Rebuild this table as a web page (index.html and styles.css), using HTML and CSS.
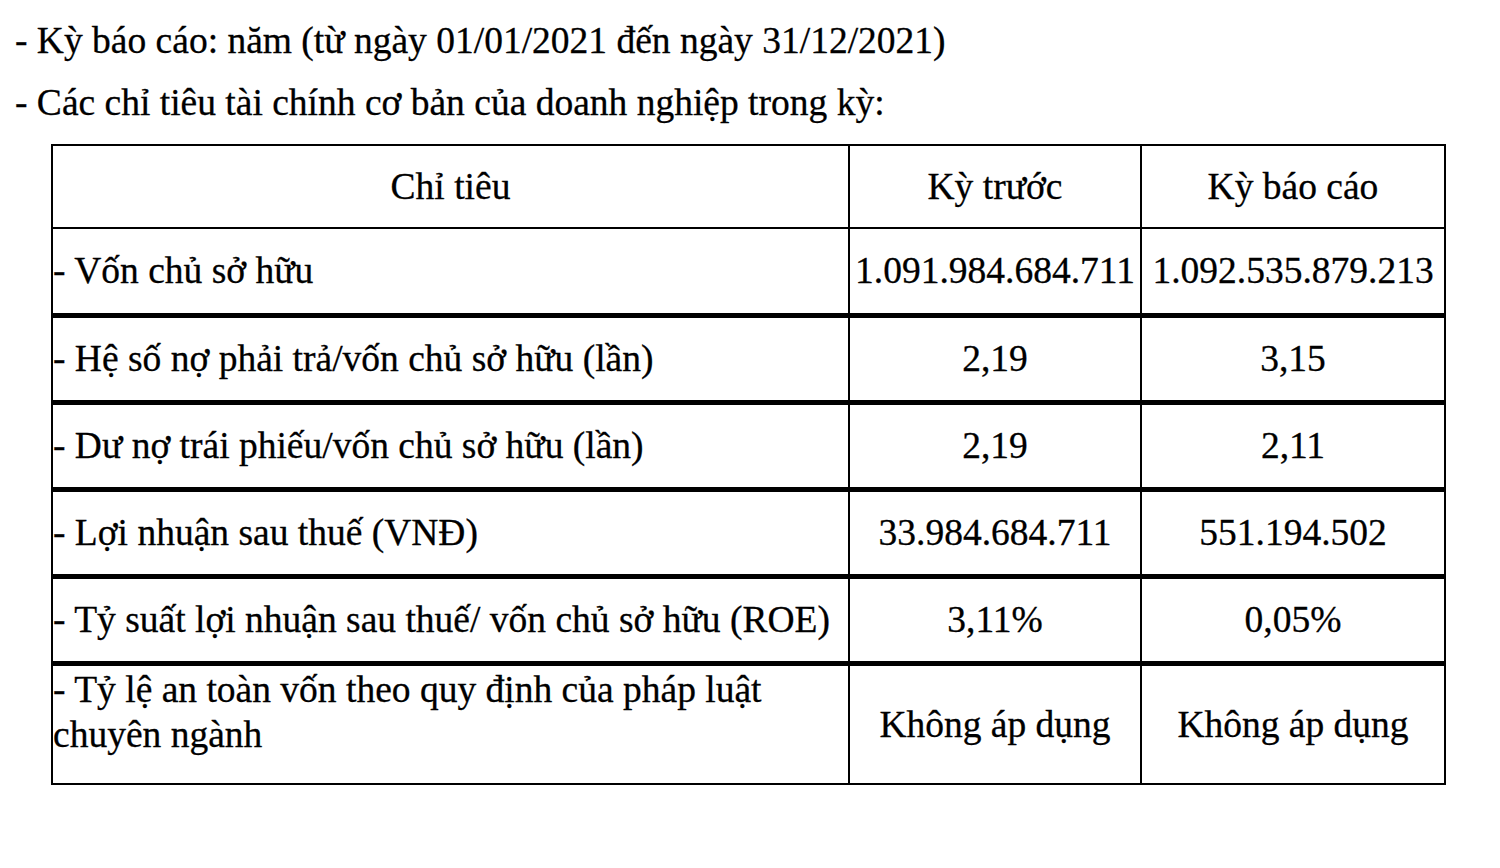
FILE: index.html
```html
<!DOCTYPE html>
<html lang="vi">
<head>
<meta charset="utf-8">
<title>Chỉ tiêu tài chính</title>
<link rel="stylesheet" href="styles.css">
</head>
<body>
<div class="page">
  <p class="line">- Kỳ báo cáo: năm (từ ngày 01/01/2021 đến ngày 31/12/2021)</p>
  <p class="line">- Các chỉ tiêu tài chính cơ bản của doanh nghiệp trong kỳ:</p>
  <table class="fin">
    <colgroup>
      <col class="c1">
      <col class="c2">
      <col class="c3">
    </colgroup>
    <tr class="head">
      <td class="center">Chỉ tiêu</td>
      <td class="center">Kỳ trước</td>
      <td class="center">Kỳ báo cáo</td>
    </tr>
    <tr class="row">
      <td class="label">- Vốn chủ sở hữu</td>
      <td class="center">1.091.984.684.711</td>
      <td class="center">1.092.535.879.213</td>
    </tr>
    <tr class="row">
      <td class="label">- Hệ số nợ phải trả/vốn chủ sở hữu (lần)</td>
      <td class="center">2,19</td>
      <td class="center">3,15</td>
    </tr>
    <tr class="row">
      <td class="label">- Dư nợ trái phiếu/vốn chủ sở hữu (lần)</td>
      <td class="center">2,19</td>
      <td class="center">2,11</td>
    </tr>
    <tr class="row">
      <td class="label">- Lợi nhuận sau thuế (VNĐ)</td>
      <td class="center">33.984.684.711</td>
      <td class="center">551.194.502</td>
    </tr>
    <tr class="row">
      <td class="label">- Tỷ suất lợi nhuận sau thuế/ vốn chủ sở hữu (ROE)</td>
      <td class="center">3,11%</td>
      <td class="center">0,05%</td>
    </tr>
    <tr class="last">
      <td class="label top">- Tỷ lệ an toàn vốn theo quy định của pháp luật chuyên ngành</td>
      <td class="center">Không áp dụng</td>
      <td class="center">Không áp dụng</td>
    </tr>
  </table>
</div>
</body>
</html>
```

FILE: styles.css
```css
html, body {
  margin: 0;
  padding: 0;
  background: #ffffff;
}

.page {
  font-family: "Liberation Serif", "Times New Roman", serif;
  font-size: 37.5px;
  color: #000000;
  -webkit-text-stroke: 0.3px #000;
  padding: 10px 0 0 15px;
}

.line {
  margin: 0;
  line-height: 62px;
  white-space: nowrap;
}

.fin {
  margin: 10px 0 0 36px;
  border-collapse: collapse;
  table-layout: fixed;
  width: 1393px;
  line-height: 45px;
}

.c1 { width: 797px; }
.c2 { width: 292px; }
.c3 { width: 304px; }

.fin td {
  border: 2px solid #000;
  padding: 0;
  vertical-align: middle;
}

.head { height: 83px; }
.row { height: 87px; }
.last { height: 121px; }

.row td {
  border-bottom: 5px solid #000;
}

.center {
  text-align: center;
  white-space: nowrap;
}

.label {
  text-align: left;
  white-space: nowrap;
}

.label.top {
  white-space: normal;
  vertical-align: top;
  padding-top: 1px;
  padding-right: 30px;
}
```
